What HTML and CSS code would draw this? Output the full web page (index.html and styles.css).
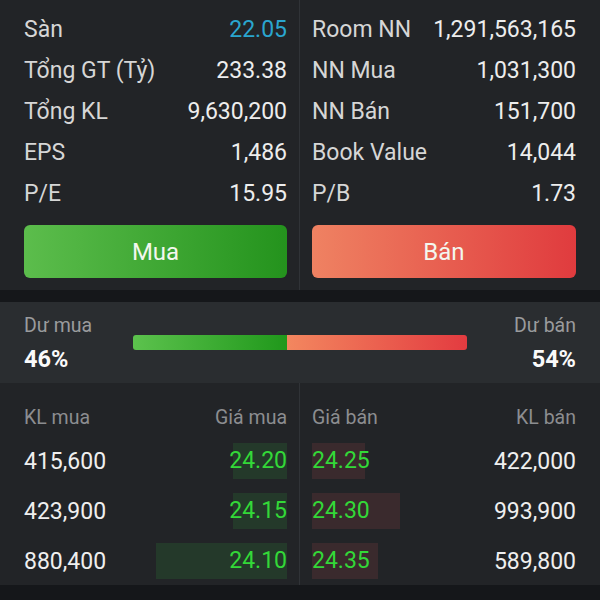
FILE: index.html
```html
<!DOCTYPE html>
<html lang="vi">
<head>
  <meta charset="UTF-8">
  <title>Chi tiết cổ phiếu</title>
  <link rel="stylesheet" href="styles.css">
</head>
<body>
  <div class="panel stats">
    <div class="col left">
      <div class="row"><span class="label">Sàn</span><span class="value floor">22.05</span></div>
      <div class="row"><span class="label">Tổng GT (Tỷ)</span><span class="value">233.38</span></div>
      <div class="row"><span class="label">Tổng KL</span><span class="value">9,630,200</span></div>
      <div class="row"><span class="label">EPS</span><span class="value">1,486</span></div>
      <div class="row"><span class="label">P/E</span><span class="value">15.95</span></div>
      <button class="btn buy">Mua</button>
    </div>
    <div class="col right">
      <div class="row"><span class="label">Room NN</span><span class="value">1,291,563,165</span></div>
      <div class="row"><span class="label">NN Mua</span><span class="value">1,031,300</span></div>
      <div class="row"><span class="label">NN Bán</span><span class="value">151,700</span></div>
      <div class="row"><span class="label">Book Value</span><span class="value">14,044</span></div>
      <div class="row"><span class="label">P/B</span><span class="value">1.73</span></div>
      <button class="btn sell">Bán</button>
    </div>
  </div>

  <div class="spacer"></div>

  <div class="panel balance">
    <div class="side">
      <div class="side-label">Dư mua</div>
      <div class="side-pct">46%</div>
    </div>
    <div class="ratio">
      <div class="ratio-buy" style="width: 46%"></div>
      <div class="ratio-sell"></div>
    </div>
    <div class="side end">
      <div class="side-label">Dư bán</div>
      <div class="side-pct">54%</div>
    </div>
  </div>

  <div class="panel book">
    <div class="col left">
      <div class="book-head"><span>KL mua</span><span>Giá mua</span></div>
      <div class="book-row"><span class="qty">415,600</span><span class="price"><i class="depth" style="width: 54px"></i><b>24.20</b></span></div>
      <div class="book-row"><span class="qty">423,900</span><span class="price"><i class="depth" style="width: 54px"></i><b>24.15</b></span></div>
      <div class="book-row"><span class="qty">880,400</span><span class="price"><i class="depth" style="width: 131px"></i><b>24.10</b></span></div>
    </div>
    <div class="col right">
      <div class="book-head"><span>Giá bán</span><span>KL bán</span></div>
      <div class="book-row"><span class="price"><i class="depth" style="width: 53px"></i><b>24.25</b></span><span class="qty">422,000</span></div>
      <div class="book-row"><span class="price"><i class="depth" style="width: 88px"></i><b>24.30</b></span><span class="qty">993,900</span></div>
      <div class="book-row"><span class="price"><i class="depth" style="width: 66px"></i><b>24.35</b></span><span class="qty">589,800</span></div>
    </div>
  </div>

  <div class="footer"></div>
</body>
</html>
```

FILE: styles.css
```css
body {
  margin: 0;
  background: #15171a;
  font-family: Roboto, "Noto Sans", sans-serif;
  color: #ececec;
}
.panel {
  background: #222427;
}
.stats, .book {
  display: grid;
  grid-template-columns: 300px 300px;
}
.col.left {
  border-right: 1px solid #303337;
  padding: 0 12px 0 24px;
}
.col.right {
  padding: 0 24px 0 12px;
}
.stats .col {
  padding-top: 9px;
  padding-bottom: 12px;
}
.row {
  display: flex;
  justify-content: space-between;
  align-items: center;
  height: 41px;
  font-size: 23px;
}
.label {
  color: #d6d6d6;
}
.value {
  color: #ededed;
}
.value.floor {
  color: #2aa6cf;
}
.btn {
  display: block;
  width: 100%;
  height: 53px;
  margin-top: 11px;
  border: none;
  border-radius: 6px;
  font-family: Roboto, sans-serif;
  font-size: 24px;
  color: #f3f7ee;
}
.btn.buy {
  background: linear-gradient(90deg, #5cbd4c, #24931d);
}
.btn.sell {
  background: linear-gradient(90deg, #ef8262, #e03b3e);
}
.spacer {
  height: 12px;
}
.balance {
  background: #2a2d30;
  display: grid;
  grid-template-columns: 109px 1fr 109px;
  align-items: center;
  height: 81px;
  padding: 0 24px;
}
.side {
  align-self: start;
  padding-top: 13px;
}
.side.end {
  text-align: right;
}
.side-label {
  font-size: 19.5px;
  line-height: 22px;
  color: #9a9b9d;
}
.side-pct {
  margin-top: 9px;
  font-size: 23.5px;
  line-height: 26px;
  font-weight: bold;
  color: #fafafa;
}
.ratio {
  display: flex;
  height: 15px;
  border-radius: 3px;
  overflow: hidden;
}
.ratio-buy {
  background: linear-gradient(90deg, #5cc24d, #20981b);
}
.ratio-sell {
  flex: 1;
  background: linear-gradient(90deg, #f3875f, #e33b40);
}
.book {
  height: 202px;
}
.book .col {
  padding-top: 16px;
}
.book-head {
  display: flex;
  justify-content: space-between;
  align-items: center;
  height: 36px;
  font-size: 19.5px;
  color: #8c8d90;
}
.book-row {
  display: flex;
  justify-content: space-between;
  align-items: center;
  height: 36px;
  margin-top: 14px;
  font-size: 23px;
}
.book-head + .book-row {
  margin-top: 8px;
}
.qty {
  color: #efefef;
}
.price {
  position: relative;
  height: 36px;
  line-height: 36px;
}
.price b {
  position: relative;
  font-weight: normal;
  color: #33d838;
}
.depth {
  position: absolute;
  top: 0;
  bottom: 0;
}
.left .depth {
  right: 0;
  background: #24392a;
}
.right .depth {
  left: 0;
  background: #3a2a2d;
}
.footer {
  height: 15px;
  background: #15171a;
}
```
